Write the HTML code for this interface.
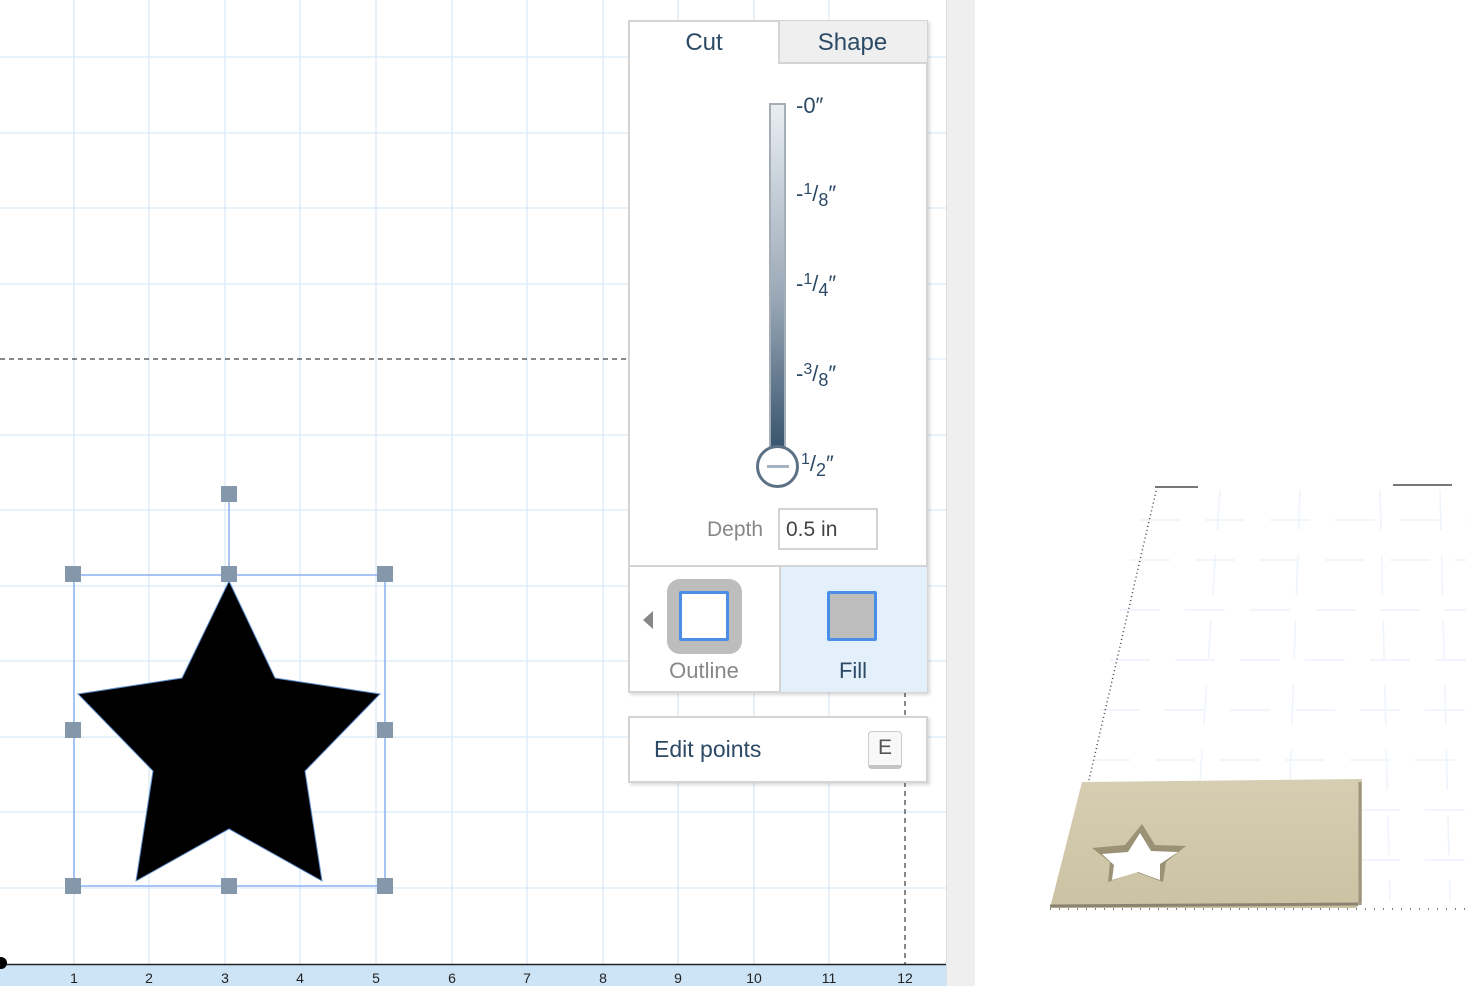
<!DOCTYPE html>
<html><head><meta charset="utf-8"><style>
*{margin:0;padding:0;box-sizing:border-box}
body{width:1466px;height:986px;overflow:hidden;background:#fff;font-family:"Liberation Sans",sans-serif;position:relative}
.abs{position:absolute}
.lbl{position:absolute;left:796px;color:#2c4a66;font-size:22px}
.lbl sup{font-size:16px;vertical-align:7px}
.lbl sub{font-size:18px;vertical-align:-5px}
</style></head><body>
<svg class="abs" style="left:0;top:0" width="1466" height="986">
<defs><linearGradient id="wood" x1="0" y1="0" x2="0" y2="1"><stop offset="0" stop-color="#d6ceb2"/><stop offset="1" stop-color="#cbc2a3"/></linearGradient></defs>
<g stroke="#dbe9f8" stroke-width="1.3">
<line x1="74" y1="0" x2="74" y2="965"/><line x1="149" y1="0" x2="149" y2="965"/><line x1="225" y1="0" x2="225" y2="965"/><line x1="300" y1="0" x2="300" y2="965"/><line x1="376" y1="0" x2="376" y2="965"/><line x1="452" y1="0" x2="452" y2="965"/><line x1="527" y1="0" x2="527" y2="965"/><line x1="603" y1="0" x2="603" y2="965"/><line x1="678" y1="0" x2="678" y2="965"/><line x1="754" y1="0" x2="754" y2="965"/><line x1="829" y1="0" x2="829" y2="965"/>
<line x1="0" y1="57" x2="946" y2="57"/><line x1="0" y1="133" x2="946" y2="133"/><line x1="0" y1="208" x2="946" y2="208"/><line x1="0" y1="284" x2="946" y2="284"/><line x1="0" y1="435" x2="946" y2="435"/><line x1="0" y1="510" x2="946" y2="510"/><line x1="0" y1="586" x2="946" y2="586"/><line x1="0" y1="661" x2="946" y2="661"/><line x1="0" y1="737" x2="946" y2="737"/><line x1="0" y1="812" x2="946" y2="812"/><line x1="0" y1="888" x2="946" y2="888"/>
</g>
<line x1="0" y1="359" x2="628" y2="359" stroke="#111" stroke-dasharray="5,4"/>
<line x1="628" y1="359" x2="946" y2="359" stroke="#dbe9f8"/>
<line x1="905" y1="692" x2="905" y2="965" stroke="#111" stroke-dasharray="5,4"/>
<rect x="0" y="965" width="946" height="21" fill="#cde4f7"/>
<line x1="0" y1="964.5" x2="946" y2="964.5" stroke="#222" stroke-width="1.5"/>
<circle cx="1" cy="963" r="6" fill="#000"/>
<g font-size="14" fill="#222" text-anchor="middle" font-family="Liberation Sans" transform="scale(1,1)">
<text x="74" y="983">1</text><text x="149" y="983">2</text><text x="225" y="983">3</text><text x="300" y="983">4</text><text x="376" y="983">5</text><text x="452" y="983">6</text><text x="527" y="983">7</text><text x="603" y="983">8</text><text x="678" y="983">9</text><text x="754" y="983">10</text><text x="829" y="983">11</text><text x="905" y="983">12</text></g>
<rect x="946" y="0" width="29" height="986" fill="#efefef"/>
<line x1="946.5" y1="0" x2="946.5" y2="986" stroke="#ddd"/>
<polygon points="229,581 275,678 380,694 305,771 322,881 229,829 136,881 153,771 78,694 182,678" fill="#000" stroke="#5f8fd0" stroke-width="1"/>
<g stroke="#8ab0f0" stroke-width="1.5" fill="none"><rect x="74" y="575" width="311" height="311"/><line x1="229" y1="494" x2="229" y2="575"/></g>
<g fill="#8497ab"><rect x="221" y="486" width="16" height="16"/><rect x="65" y="566" width="16" height="16"/><rect x="221" y="566" width="16" height="16"/><rect x="377" y="566" width="16" height="16"/><rect x="65" y="722" width="16" height="16"/><rect x="377" y="722" width="16" height="16"/><rect x="65" y="878" width="16" height="16"/><rect x="221" y="878" width="16" height="16"/><rect x="377" y="878" width="16" height="16"/></g>
<g stroke="#eef4fb" stroke-width="1.5" stroke-dasharray="40,25">
<line x1="1140" y1="520" x2="1466" y2="520"/><line x1="1130" y1="560" x2="1466" y2="560"/><line x1="1120" y1="610" x2="1466" y2="610"/><line x1="1110" y1="660" x2="1466" y2="660"/><line x1="1100" y1="710" x2="1466" y2="710"/><line x1="1090" y1="760" x2="1466" y2="760"/><line x1="1360" y1="810" x2="1466" y2="810"/><line x1="1360" y1="860" x2="1466" y2="860"/>
<line x1="1220" y1="490" x2="1200" y2="780"/><line x1="1300" y1="490" x2="1290" y2="780"/><line x1="1380" y1="490" x2="1390" y2="900"/><line x1="1440" y1="490" x2="1450" y2="900"/></g>
<line x1="1157" y1="487" x2="1060" y2="905" stroke="#444" stroke-width="1.5" stroke-dasharray="1,3"/>
<line x1="1155" y1="487" x2="1198" y2="487" stroke="#777" stroke-width="2"/>
<line x1="1393" y1="485" x2="1452" y2="485" stroke="#777" stroke-width="2"/>
<line x1="1050" y1="909" x2="1466" y2="909" stroke="#555" stroke-width="1.5" stroke-dasharray="1,8"/>
<polygon points="1082,782 1362,779 1362,902 1356,908 1050,908" fill="url(#wood)"/>
<line x1="1050" y1="906" x2="1358" y2="904" stroke="#8a8470" stroke-width="3"/>
<line x1="1360" y1="782" x2="1360" y2="905" stroke="#9d967f" stroke-width="3"/>
<polygon points="1142,824 1155,845 1186,846 1166,862 1163,882 1136,872 1108,882 1110,862 1092,848 1125,845" fill="#9b9275"/>
<polygon points="1140,833 1151,851 1178,852 1160,864 1160,880 1138,872 1112,880 1114,865 1102,854 1128,852" fill="#fff"/>
</svg>
<div class="abs" style="left:628px;top:20px;width:300px;height:673px;border:2px solid #d4d4d4;background:#fff;box-shadow:2px 2px 3px rgba(0,0,0,.15)"></div>
<div class="abs" style="left:778px;top:21px;width:149px;height:43px;background:#efefef;border-left:2px solid #d4d4d4;border-bottom:2px solid #d4d4d4"></div>
<div class="abs" style="left:630px;top:29px;width:148px;text-align:center;font-size:24px;color:#2c4a66">Cut</div>
<div class="abs" style="left:778px;top:29px;width:149px;text-align:center;font-size:24px;color:#2c4a66">Shape</div>
<div class="abs" style="left:769px;top:103px;width:17px;height:355px;border:2px solid #a5aeb7;background:linear-gradient(#e9eef3,#9aa8b6 55%,#34506b)"></div>
<div class="abs" style="left:756px;top:445px;width:43px;height:43px;border-radius:50%;border:3px solid #5d7186;background:#fff"></div>
<div class="abs" style="left:767px;top:465px;width:22px;height:3px;background:#a5b3c1"></div>
<div class="lbl" style="top:93px">-0″</div>
<div class="lbl" style="top:181px">-<sup>1</sup>/<sub>8</sub>″</div>
<div class="lbl" style="top:271px">-<sup>1</sup>/<sub>4</sub>″</div>
<div class="lbl" style="top:361px">-<sup>3</sup>/<sub>8</sub>″</div>
<div class="lbl" style="top:451px;left:801px"><sup>1</sup>/<sub>2</sub>″</div>
<div class="abs" style="left:707px;top:518px;font-size:21px;color:#888">Depth</div>
<div class="abs" style="left:778px;top:508px;width:100px;height:42px;border:2px solid #d4d4d4;font-size:21px;color:#444;padding:8px 0 0 6px">0.5 in</div>
<div class="abs" style="left:628px;top:565px;width:300px;height:2px;background:#d4d4d4"></div>
<div class="abs" style="left:779px;top:567px;width:148px;height:125px;background:#e3effb;border-left:2px solid #d4d4d4"></div>
<div class="abs" style="left:643px;top:611px;width:0;height:0;border-top:9px solid transparent;border-bottom:9px solid transparent;border-right:10px solid #888"></div>
<div class="abs" style="left:667px;top:579px;width:75px;height:75px;border-radius:13px;background:#bdbdbd"></div>
<div class="abs" style="left:679px;top:591px;width:50px;height:50px;border:3px solid #4a8ee6;background:#fff;border-radius:2px"></div>
<div class="abs" style="left:827px;top:591px;width:50px;height:50px;border:3px solid #4a8ee6;background:#bdbdbd;border-radius:2px"></div>
<div class="abs" style="left:630px;top:658px;width:148px;text-align:center;font-size:22px;color:#888">Outline</div>
<div class="abs" style="left:779px;top:658px;width:148px;text-align:center;font-size:22px;color:#2c4a66">Fill</div>
<div class="abs" style="left:628px;top:716px;width:300px;height:67px;border:2px solid #d4d4d4;background:#fff;box-shadow:2px 2px 3px rgba(0,0,0,.15)"></div>
<div class="abs" style="left:654px;top:736px;font-size:23px;color:#2c4a66">Edit points</div>
<div class="abs" style="left:868px;top:731px;width:34px;height:38px;border:1px solid #ccc;border-bottom:4px solid #c4c4c4;border-radius:4px;background:#f8f8f8;text-align:center;font-size:21px;color:#555;padding-top:4px">E</div>
</body></html>
